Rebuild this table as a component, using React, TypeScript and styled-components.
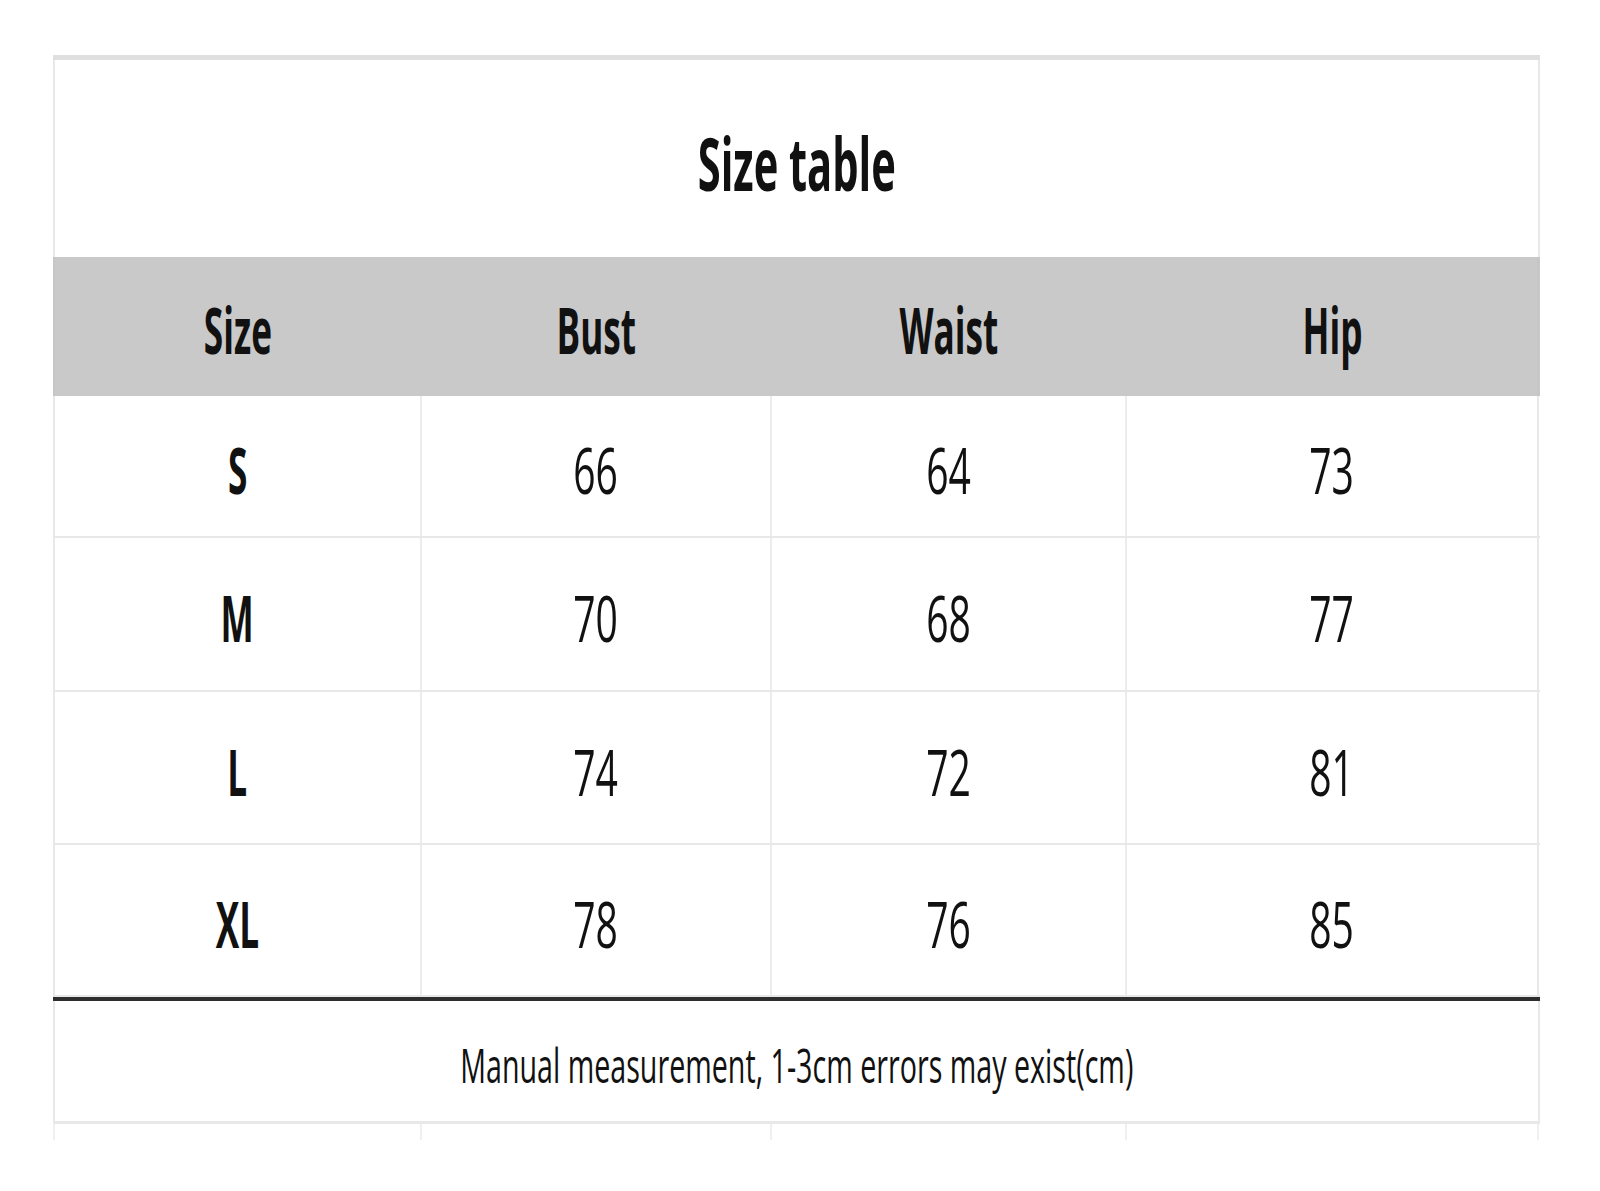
import React from "react";
import styled, { createGlobalStyle } from "styled-components";

const Global = createGlobalStyle`
  html, body { margin: 0; padding: 0; background: #ffffff; }
  body { font-family: "Open Sans", "Noto Sans", sans-serif; color: #111; }
`;

const COLS = "367px 350px 355px 414px";
const LINE = "#e8e8e8";

const Page = styled.div`
  width: 1600px;
  height: 1191px;
  padding: 55px 0 0 53px;
  box-sizing: border-box;
  background: #fff;
`;

const Sheet = styled.div`
  width: 1487px;
  display: flex;
  flex-direction: column;
`;

const TopRule = styled.div`
  height: 5px;
  background: #dfdfdf;
`;

const WideRow = styled.div<{ $h: number }>`
  height: ${(p) => p.$h}px;
  box-sizing: border-box;
  border-left: 2px solid ${LINE};
  border-right: 2px solid ${LINE};
  display: flex;
  align-items: center;
  justify-content: center;
`;

const GridRow = styled.div<{ $h: number; $head?: boolean }>`
  height: ${(p) => p.$h}px;
  box-sizing: border-box;
  display: grid;
  grid-template-columns: ${COLS};
  background: ${(p) => (p.$head ? "#c9c9c9" : "#fff")};
  border-bottom: ${(p) => (p.$head ? "0" : `2px solid ${LINE}`)};
`;

const Cell = styled.div<{ $head?: boolean }>`
  display: flex;
  align-items: center;
  justify-content: center;
  box-sizing: border-box;
  border-left: 2px solid ${(p) => (p.$head ? "#c9c9c9" : "#ececec")};
  &:first-child {
    border-left-color: ${(p) => (p.$head ? "#c6c6c6" : LINE)};
  }
  &:last-child {
    border-right: 2px solid ${(p) => (p.$head ? "#c6c6c6" : LINE)};
  }
`;

const Stretch = styled.span<{ $size: number; $sx: number; $bold?: boolean; $dy?: number }>`
  display: inline-block;
  font-family: "Open Sans", "Noto Sans", sans-serif;
  font-size: ${(p) => p.$size}px;
  font-weight: ${(p) => (p.$bold ? 700 : 400)};
  line-height: 1;
  white-space: nowrap;
  color: #111;
  transform: translateY(${(p) => p.$dy ?? 0}px) scaleX(${(p) => p.$sx});
  transform-origin: center;
`;

const ThickRule = styled.div`
  height: 4px;
  background: #2e2e2e;
  width: 1487px;
`;

const Stubs = styled.div`
  height: 16px;
  display: grid;
  grid-template-columns: ${COLS};
  border-top: 3px solid ${LINE};
`;

const Stub = styled.div`
  border-left: 2px solid #f0f0f0;
  &:last-child { border-right: 2px solid #f0f0f0; }
`;

const rows = [
  { size: "S", v: ["66", "64", "73"], h: 142 },
  { size: "M", v: ["70", "68", "77"], h: 154 },
  { size: "L", v: ["74", "72", "81"], h: 153 },
  { size: "XL", v: ["78", "76", "85"], h: 152 },
];

export default function App() {
  return (
    <Page>
      <Global />
      <Sheet>
        <TopRule />
        <WideRow $h={197}>
          <Stretch $size={73} $sx={0.57} $bold $dy={4}>Size table</Stretch>
        </WideRow>
        <GridRow $h={139} $head>
          {["Size", "Bust", "Waist", "Hip"].map((t) => (
            <Cell key={t} $head>
              <Stretch $size={64} $sx={0.55} $bold $dy={3}>{t}</Stretch>
            </Cell>
          ))}
        </GridRow>
        {rows.map((r) => (
          <GridRow key={r.size} $h={r.h}>
            <Cell>
              <Stretch $size={64} $sx={0.55} $bold $dy={4}>{r.size}</Stretch>
            </Cell>
            {r.v.map((x, i) => (
              <Cell key={i}>
                <Stretch $size={64} $sx={0.61} $dy={4}>{x}</Stretch>
              </Cell>
            ))}
          </GridRow>
        ))}
        <ThickRule />
        <WideRow $h={120}>
          <Stretch $size={48} $sx={0.597} $dy={4}>Manual measurement, 1-3cm errors may exist(cm)</Stretch>
        </WideRow>
        <Stubs>
          <Stub />
          <Stub />
          <Stub />
          <Stub />
        </Stubs>
      </Sheet>
    </Page>
  );
}
